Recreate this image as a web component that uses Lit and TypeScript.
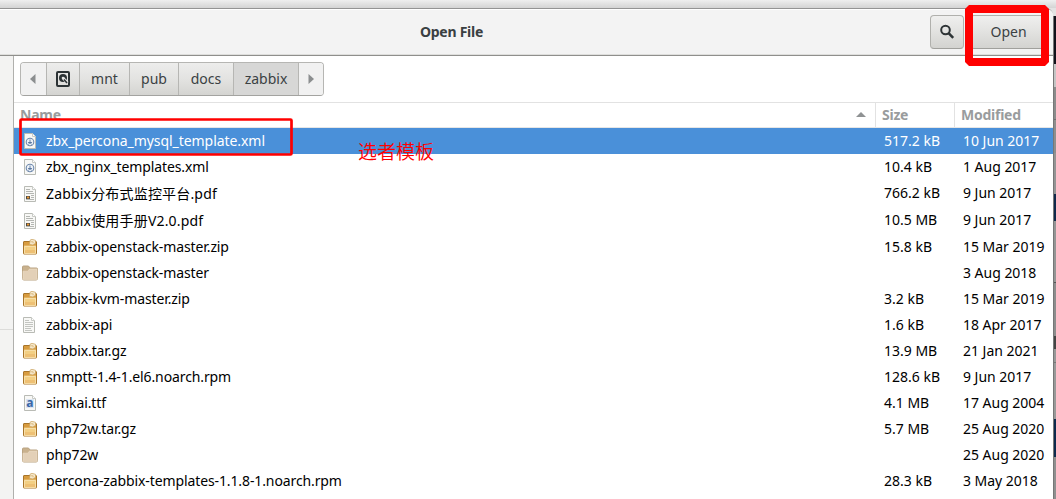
import { LitElement, html, css, svg } from 'lit';
import { customElement, property } from 'lit/decorators.js';
import { classMap } from 'lit/directives/class-map.js';

type FileKind = 'xml' | 'pdf' | 'archive' | 'folder' | 'text' | 'font';

interface FileEntry {
  name: string;
  kind: FileKind;
  size: string;
  modified: string;
}

const FILES: FileEntry[] = [
  { name: 'zbx_percona_mysql_template.xml', kind: 'xml', size: '517.2 kB', modified: '10 Jun 2017' },
  { name: 'zbx_nginx_templates.xml', kind: 'xml', size: '10.4 kB', modified: '1 Aug 2017' },
  { name: 'Zabbix分布式监控平台.pdf', kind: 'pdf', size: '766.2 kB', modified: '9 Jun 2017' },
  { name: 'Zabbix使用手册V2.0.pdf', kind: 'pdf', size: '10.5 MB', modified: '9 Jun 2017' },
  { name: 'zabbix-openstack-master.zip', kind: 'archive', size: '15.8 kB', modified: '15 Mar 2019' },
  { name: 'zabbix-openstack-master', kind: 'folder', size: '', modified: '3 Aug 2018' },
  { name: 'zabbix-kvm-master.zip', kind: 'archive', size: '3.2 kB', modified: '15 Mar 2019' },
  { name: 'zabbix-api', kind: 'text', size: '1.6 kB', modified: '18 Apr 2017' },
  { name: 'zabbix.tar.gz', kind: 'archive', size: '13.9 MB', modified: '21 Jan 2021' },
  { name: 'snmptt-1.4-1.el6.noarch.rpm', kind: 'archive', size: '128.6 kB', modified: '9 Jun 2017' },
  { name: 'simkai.ttf', kind: 'font', size: '4.1 MB', modified: '17 Aug 2004' },
  { name: 'php72w.tar.gz', kind: 'archive', size: '5.7 MB', modified: '25 Aug 2020' },
  { name: 'php72w', kind: 'folder', size: '', modified: '25 Aug 2020' },
  { name: 'percona-zabbix-templates-1.1.8-1.noarch.rpm', kind: 'archive', size: '28.3 kB', modified: '3 May 2018' },
];

const page = svg`
  <path d="M2.500 .5h8l3 3v12h-11z" fill="#f8f8f6" stroke="#b9bbb5"/>
  <path d="M10.500 .5v3h3" fill="#fff" stroke="#c9cbc6"/>
`;

const ICONS = {
  xml: svg`
    ${page}
    <circle cx="8" cy="9" r="3.800" fill="#edf2f8" stroke="#6d87ab" stroke-width="1.100"/>
    <path d="M8 6.500v3M6 9.500h4M8 9.500l-1.500 2M8 9.500l1.500 2" fill="none" stroke="#4a6a96" stroke-width=".8"/>
  `,
  pdf: svg`
    ${page}
    <path d="M4 3.500h4M4 5.500h7M4 7.500h8M9 9.500h3M9 11.500h3M4 13.500h8" stroke="#b4b6b2"/>
    <rect x="4" y="10" width="4" height="3" fill="#4c4a46"/>
    <rect x="5" y="10.600" width="2.200" height="1.800" fill="#f09a30"/>
  `,
  text: svg`
    <path d="M1.500 .5h8l3 3v12h-11z" fill="#f8f8f6" stroke="#b9bbb5"/>
    <path d="M9.500 .5v3h3" fill="#fff" stroke="#c9cbc6"/>
    <path d="M3 3.500h4M3 5.500h8M3 7.500h8M3 9.500h8M3 11.500h6M3 13.500h7" stroke="#c3c5c1"/>
  `,
  font: svg`
    ${page}
    <rect x="4" y="4" width="8" height="9" fill="#dce6f2"/>
    <text x="4.300" y="12" font-size="12" font-weight="700" fill="#3a67a8">a</text>
  `,
  archive: svg`
    <path d="M1.500 3q0-.5.500-.5h12q.5 0 .5.500v11.500q0 .5-.5.500h-12q-.5 0-.5-.5z" fill="#edc77c" stroke="#a8752a"/>
    <path d="M2 3h12v3.500h-12z" fill="#d89c40"/>
    <path d="M2.500 7.500h11v7h-11z" fill="#f3cf83" stroke="#f9e3b2" stroke-width=".8"/>
    <path d="M3 11h10v3h-10z" fill="#eec074"/>
    <path d="M8 1.200l2-.9 3.500 1v3l-2.500 1.700-3.500-.6z" fill="#f6e9cd" stroke="#c9a05c" stroke-width=".7"/>
    <path d="M8.500 2.800h2.600v1.500" fill="none" stroke="#d6b070" stroke-width=".8"/>
  `,
  folder: svg`
    <path d="M.5 2q0-1 1-1h5l1.500 2h6.500q1 0 1 1v9.500q0 1.500-1.500 1.500h-12q-1.500 0-1.500-1.500z" fill="#c9b18d" stroke="#b9a382"/>
    <path d="M1 6.200h5l1.500-2.200h7.500v10q0 .6-.8.6h-12.400q-.8 0-.8-.6z" fill="#e3d0b7" stroke="#eedfca" stroke-width=".6"/>
  `,
};

const sharedText = css`
  :host {
    font-family: 'Noto Sans', 'Noto Sans CJK SC', sans-serif;
    font-size: 14px;
  }
`;

@customElement('path-bar')
export class PathBar extends LitElement {
  @property({ attribute: false }) folders: string[] = [];
  @property() current = '';

  static styles = [sharedText, css`
    :host {
      display: flex;
      box-sizing: border-box;
      width: 304px;
      height: 34px;
      border: 1px solid #b6b6b3;
      border-bottom-color: #a3a3a0;
      border-radius: 4px;
      overflow: hidden;
      color: #3b4143;
    }
    .step {
      display: flex;
      align-items: center;
      justify-content: center;
      box-sizing: border-box;
      border-right: 1px solid #b6b6b3;
      background: linear-gradient(#ededec, #e3e3e1 50%, #d4d4d1);
      padding-bottom: 1px;
    }
    .step:nth-child(1) { width: 26px; }
    .step:nth-child(2) { width: 33px; }
    .step:nth-child(3) { width: 50px; }
    .step:nth-child(4) { width: 49px; }
    .step:nth-child(5) { width: 55px; }
    .step:nth-child(6) { width: 65px; }
    .arrow {
      background: #f1f1f1;
      flex: none;
    }
    .arrow:first-child {
      padding-right: 2px;
    }
    .arrow:last-child {
      flex: 1;
      border-right: 0;
    }
    .current {
      background: #d7d7d6;
    }
  `];

  render() {
    return html`
      <span class="step arrow">
        <svg width="6" height="10"><path d="M5.500 0v10L0 5z" fill="#8b8e8f"/></svg>
      </span>
      <span class="step">
        <svg width="14" height="16" viewBox="0 0 14 16">
          <rect x="1" y="1" width="12" height="14" rx="1" fill="none" stroke="#2c3335" stroke-width="2"/>
          <circle cx="7" cy="7" r="4" fill="#2c3335"/>
          <circle cx="7" cy="7" r="1.300" fill="#e5e5e4"/>
          <path d="M7 7l4.500 5" stroke="#e5e5e4" stroke-width="2.800"/>
          <path d="M8 8.500l3 3.500" stroke="#2c3335" stroke-width="1.600"/>
        </svg>
      </span>
      ${this.folders.map(f => html`
        <span class=${classMap({ step: true, current: f === this.current })}>${f}</span>
      `)}
      <span class="step arrow">
        <svg width="6" height="10"><path d="M.5 0v10L6 5z" fill="#8b8e8f"/></svg>
      </span>
    `;
  }
}

@customElement('file-list')
export class FileList extends LitElement {
  @property({ attribute: false }) files: FileEntry[] = [];
  @property({ type: Number }) selected = 0;

  static styles = [sharedText, css`
    :host {
      display: block;
      border-top: 1px solid #e2e2e2;
    }
    .head, .row {
      display: grid;
      grid-template-columns: 862px 79px 1fr;
      white-space: nowrap;
    }
    .head {
      height: 24px;
      border-bottom: 1px solid #e6e6e6;
      font-weight: 700;
      letter-spacing: -0.25px;
      color: #999c9d;
    }
    .head span {
      display: flex;
      align-items: center;
      justify-content: space-between;
      padding: 0 9px 2px 6px;
      border-right: 1px solid #e2e2e2;
    }
    .head span:last-child {
      border-right: 0;
    }
    .row {
      height: 26px;
      align-items: center;
      color: #000;
    }
    .row.pdf {
      height: 27px;
    }
    .row.selected {
      background: #4a90d9;
      color: #fff;
    }
    .name {
      display: flex;
      align-items: center;
      gap: 8px;
      padding-left: 8px;
      letter-spacing: -0.11px;
    }
    .selected .name {
      letter-spacing: -0.06px;
    }
    .pdf .name {
      letter-spacing: 0.18px;
    }
    .name svg {
      flex: none;
    }
    .name span {
      padding-bottom: 2px;
    }
    .size, .modified {
      padding: 0 0 2px 8px;
    }
    .modified {
      letter-spacing: -0.02px;
    }
  `];

  render() {
    return html`
      <div class="head">
        <span>Name <svg width="10" height="5"><path d="M0 5h10L5 0z" fill="#8f9293"/></svg></span>
        <span>Size</span>
        <span>Modified</span>
      </div>
      ${this.files.map((file, i) => html`
        <div class=${classMap({ row: true, [file.kind]: true, selected: i === this.selected })}>
          <div class="name">
            <svg width="16" height="16" viewBox="0 0 16 16">${ICONS[file.kind]}</svg>
            <span>${file.name}</span>
          </div>
          <span class="size">${file.size}</span>
          <span class="modified">${file.modified}</span>
        </div>
      `)}
    `;
  }
}

@customElement('app-root')
export class AppRoot extends LitElement {
  static styles = [sharedText, css`
    :host {
      display: block;
      position: relative;
      width: 1056px;
      height: 499px;
      overflow: hidden;
      background: #fff;
    }
    .desktop {
      display: flex;
      flex-direction: column;
      height: 499px;
    }
    .backdrop {
      flex: none;
      height: 8px;
      background: linear-gradient(#efefef, #d4d4d4);
    }
    .main {
      display: flex;
      flex: 1;
      min-height: 0;
      background: linear-gradient(#e3e3e3 0 8px, #12121b 8px);
    }
    .dialog {
      display: flex;
      flex-direction: column;
      box-sizing: border-box;
      width: 1053px;
      border-top: 1px solid #949494;
      border-radius: 0 7px 0 0;
      overflow: hidden;
      background: #fff;
    }
    .behind {
      flex: 1;
      border-left: 1px solid #777;
      margin-top: 8px;
      background: linear-gradient(
        #12121b 0 48px, #c5c5c5 48px 71px, #8b8b8b 71px 103px, #6e6e6e 103px 104px,
        #8e8e8e 104px 137px, #949494 137px 178px, #10294b 178px 205px, #959595 205px 266px,
        #555 266px 267px, #8d8d8d 267px 320px, #444 320px 333px, #989898 333px 346px,
        #777 346px 347px, #999 347px 403px, #0d2a4d 403px 441px, #8f8f8f 441px
      );
    }
    header {
      display: grid;
      grid-template-columns: 903px 1fr;
      flex: none;
      box-sizing: border-box;
      height: 47px;
      border-top: 1px solid #fff;
      border-bottom: 1px solid #8f8f8c;
      background: #f3f3f3;
      box-shadow: inset 0 -1px #dededc;
      color: #2e3436;
    }
    h1 {
      margin: 0;
      padding-bottom: 2px;
      align-self: center;
      text-align: center;
      font-size: 14px;
      font-weight: 700;
      letter-spacing: -0.25px;
      color: #3a4042;
    }
    .actions {
      display: flex;
      gap: 6px;
      padding: 5px 0 0 27px;
    }
    .button {
      display: flex;
      align-items: center;
      justify-content: center;
      box-sizing: border-box;
      height: 34px;
      border: 1px solid #b0b0ac;
      border-bottom-color: #a0a09c;
      border-radius: 4px;
      background: linear-gradient(#efefee, #e2e2e0 50%, #d3d3d0);
      color: #3b4143;
    }
    .search {
      width: 34px;
    }
    .open {
      width: 77px;
      padding-bottom: 2px;
    }
    .content {
      display: flex;
      flex: 1;
      min-height: 0;
    }
    .sidebar {
      box-sizing: border-box;
      width: 14px;
      border-right: 1px solid #b0b0ad;
      background: linear-gradient(#f3f3f2 0 273px, #dcdcda 273px 274px, #f3f3f2 274px);
    }
    .browser {
      flex: 1;
    }
    path-bar {
      margin: 6px 0 6px 6px;
    }
    .marks {
      position: absolute;
      inset: 0;
    }
    .note {
      position: absolute;
      left: 358px;
      top: 137px;
      font: 350 19px/28px 'Noto Sans CJK SC', sans-serif;
      color: #f00;
    }
  `];

  render() {
    return html`
      <div class="desktop">
        <div class="backdrop"></div>
        <div class="main">
          <div class="dialog">
            <header>
              <h1>Open File</h1>
              <div class="actions">
                <span class="button search">
                  <svg width="16" height="16" viewBox="0 0 16 16" fill="none" stroke="#2e3436">
                    <circle cx="6.500" cy="6" r="4.300" stroke-width="2"/>
                    <path d="M9.600 9.200l4.600 4.600" stroke-width="2.600"/>
                  </svg>
                </span>
                <span class="button open">Open</span>
              </div>
            </header>
            <div class="content">
              <div class="sidebar"></div>
              <div class="browser">
                <path-bar .folders=${['mnt', 'pub', 'docs', 'zabbix']} current="zabbix"></path-bar>
                <file-list .files=${FILES} .selected=${0}></file-list>
              </div>
            </div>
          </div>
          <div class="behind"></div>
        </div>
      </div>
      <svg class="marks" width="1056" height="499" fill="none" stroke="#f00">
        <rect x="20.500" y="119.500" width="271" height="35" rx="1" stroke-width="2.700"/>
        <rect x="969" y="9" width="76" height="53" stroke-width="8" stroke-linejoin="bevel"/>
      </svg>
      <div class="note">选者模板</div>
    `;
  }
}
